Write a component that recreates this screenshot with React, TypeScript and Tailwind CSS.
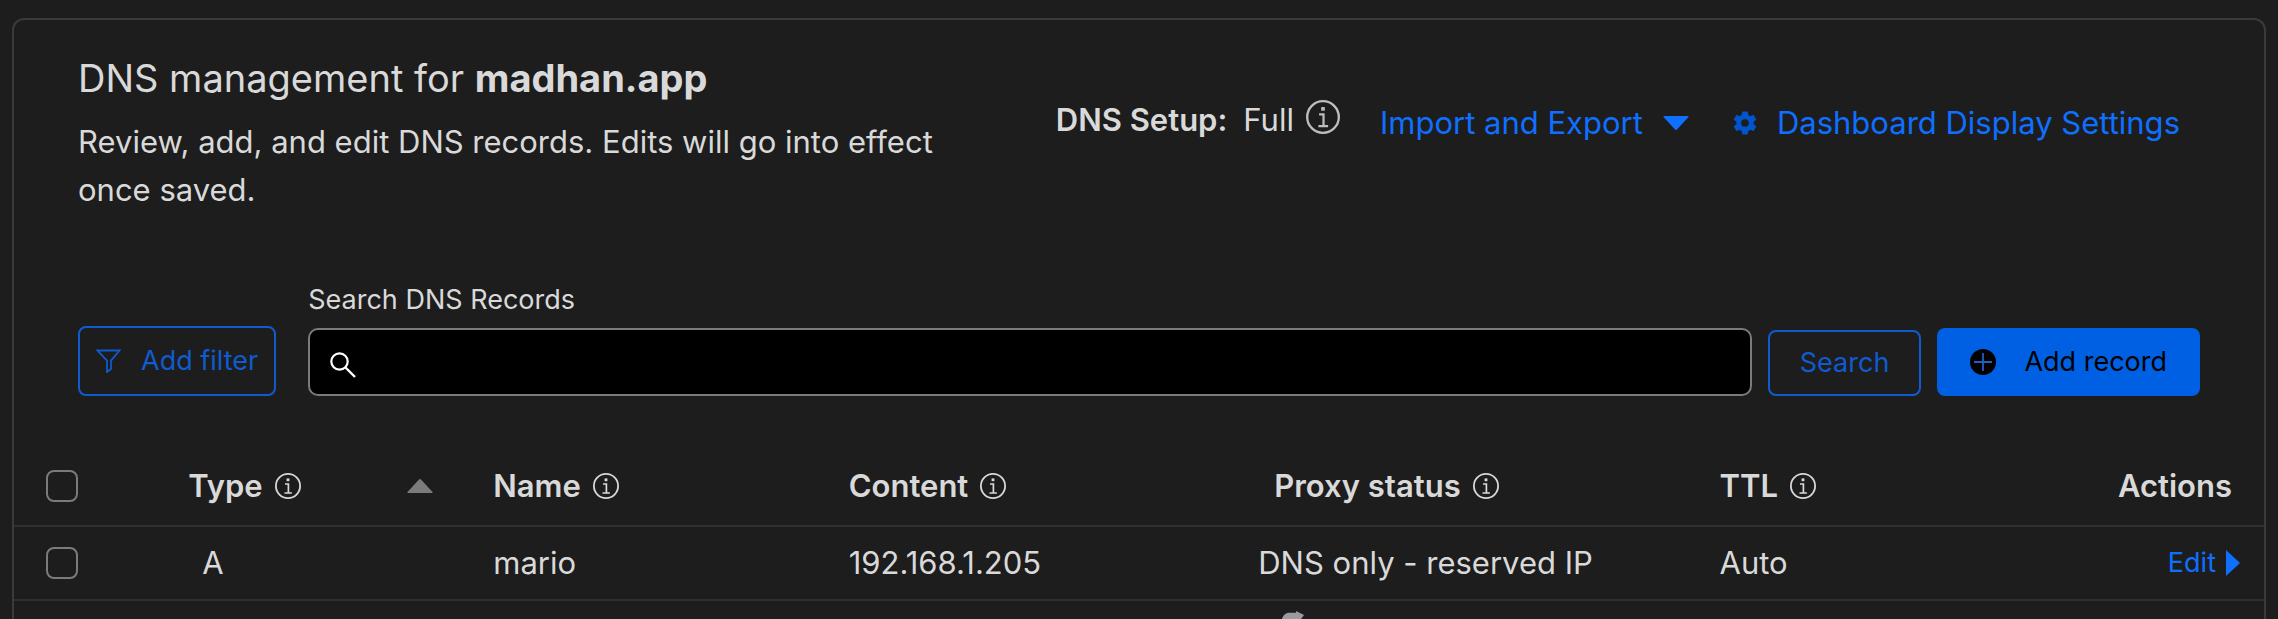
import React, { useState } from "react";

interface DnsRecord {
  id: number;
  type: string;
  name: string;
  content: string;
  proxyStatus: string;
  ttl: string;
}

interface IconProps {
  className?: string;
}

const records: DnsRecord[] = [
  {
    id: 1,
    type: "A",
    name: "mario",
    content: "192.168.1.205",
    proxyStatus: "DNS only - reserved IP",
    ttl: "Auto",
  },
];

function InfoIcon({ className }: IconProps) {
  return (
    <svg viewBox="0 0 26 26" fill="none" className={className} aria-hidden="true">
      <circle cx="13" cy="13" r="12.1" stroke="currentColor" strokeWidth="1.8" />
      <rect x="11.6" y="5.4" width="2.8" height="2.8" fill="currentColor" />
      <path d="M10 11h3.4v8.6M9.5 20h7.4" stroke="currentColor" strokeWidth="1.7" />
    </svg>
  );
}

function GearIcon({ className }: IconProps) {
  return (
    <svg viewBox="2 2 20 20" fill="currentColor" className={className} aria-hidden="true">
      <path d="M19.14 12.94c.04-.3.06-.61.06-.94s-.02-.64-.07-.94l2.03-1.58a.49.49 0 0 0 .12-.61l-1.92-3.32a.49.49 0 0 0-.59-.22l-2.39.96a7 7 0 0 0-1.62-.94l-.36-2.54a.48.48 0 0 0-.48-.41h-3.84a.48.48 0 0 0-.47.41l-.36 2.54a7 7 0 0 0-1.62.94l-2.39-.96a.48.48 0 0 0-.59.22L2.74 8.87a.48.48 0 0 0 .12.61l2.03 1.58a6 6 0 0 0 0 1.88l-2.03 1.58a.49.49 0 0 0-.12.61l1.92 3.32c.12.22.37.29.59.22l2.39-.96c.5.38 1.03.7 1.62.94l.36 2.54c.05.24.24.41.48.41h3.84c.24 0 .44-.17.47-.41l.36-2.54a7 7 0 0 0 1.62-.94l2.39.96c.22.08.47 0 .59-.22l1.92-3.32a.48.48 0 0 0-.12-.61zM12 15.2a3.2 3.2 0 1 1 0-6.4 3.2 3.2 0 0 1 0 6.4z" />
    </svg>
  );
}

function FilterIcon({ className }: IconProps) {
  return (
    <svg viewBox="0 0 25 24" fill="none" className={className} aria-hidden="true">
      <path d="M1.5 1.5h22l-8.5 10.2v8.3l-4 3v-11.3z" stroke="currentColor" strokeWidth="1.8" />
    </svg>
  );
}

function SearchIcon({ className }: IconProps) {
  return (
    <svg viewBox="0 0 26 26" fill="none" className={className} aria-hidden="true">
      <circle cx="9.5" cy="9.5" r="8.2" stroke="currentColor" strokeWidth="2.2" />
      <path d="M15.5 15.5l9.5 9.5" stroke="currentColor" strokeWidth="2.4" />
    </svg>
  );
}

function PlusIcon({ className }: IconProps) {
  return (
    <svg viewBox="0 0 26 26" fill="none" className={className} aria-hidden="true">
      <circle cx="13" cy="13" r="13" fill="currentColor" />
      <path d="M13 4v18M4 13h18" stroke="#1f5fc8" strokeWidth="1.8" />
    </svg>
  );
}

function HeaderLabel({ children }: { children: React.ReactNode }) {
  return (
    <span className="inline-flex items-center gap-3">
      {children}
      <InfoIcon className="size-[26px] shrink-0" />
    </span>
  );
}

function RowCheckbox({ label }: { label: string }) {
  return (
    <input
      type="checkbox"
      aria-label={label}
      className="block size-8 appearance-none rounded-lg border-2 border-[#7b7b7b] checked:bg-[#0060e3]"
    />
  );
}

export default function App() {
  const [query, setQuery] = useState("");

  return (
    <div className="h-screen overflow-hidden bg-[#1d1d1d] px-3 pt-[18px] font-['Inter','Liberation_Sans',sans-serif] text-[#d9d9d9]">
      <main className="min-h-full rounded-xl border-2 border-[#3a3a3a]">
        <header className="flex items-start justify-between pt-8 pr-[84px] pl-16">
          <div className="w-[880px]">
            <h1 className="text-[38px] leading-[52px]">
              DNS management for <strong className="font-bold">madhan.app</strong>
            </h1>
            <p className="mt-3.5 text-[31px] leading-12">
              Review, add, and edit DNS records. Edits will go into effect once saved.
            </p>
          </div>
          <div className="flex items-start pt-12 text-[31px] leading-10">
            <div className="flex items-start">
              <span className="font-semibold">DNS Setup:</span>
              <span className="ml-4">Full</span>
              <InfoIcon className="ml-3 size-[34px] text-[#bdbdbd]" />
            </div>
            <div className="ml-10 flex gap-11 pt-[3px] text-[#0f6fff]">
              <button type="button" className="flex items-center gap-5">
                Import and Export
                <svg viewBox="0 0 26 14" fill="currentColor" className="h-3.5 w-[26px]" aria-hidden="true">
                  <path d="M1 0h24q1 0 .5 1l-11.5 12.5q-1 1-2 0L.5 1q-.5-1 .5-1z" />
                </svg>
              </button>
              <a href="#settings" className="flex items-center gap-5">
                <GearIcon className="size-6 text-[#0055cc]" />
                Dashboard Display Settings
              </a>
            </div>
          </div>
        </header>

        <form
          className="mt-[68px] flex items-end px-16 text-[27px]"
          onSubmit={(e) => e.preventDefault()}
        >
          <button
            type="button"
            className="flex h-[70px] items-center gap-5 rounded-lg border-2 border-[#0f5bcf] px-4 whitespace-nowrap text-[#0f5bcf]"
          >
            <FilterIcon className="h-6 w-[25px]" />
            Add filter
          </button>
          <div className="ml-8 grow">
            <label htmlFor="search" className="block pb-2.5 leading-9">
              Search DNS Records
            </label>
            <div className="flex h-[68px] items-center rounded-[10px] border-2 border-[#7b7b7b] bg-black pt-1.5 pl-5">
              <SearchIcon className="size-[26px] text-white" />
              <input
                id="search"
                type="text"
                value={query}
                onChange={(e) => setQuery(e.target.value)}
                className="ml-4 h-full grow bg-transparent outline-none"
              />
            </div>
          </div>
          <button
            type="submit"
            className="ml-4 h-[66px] rounded-lg border-2 border-[#0f5bcf] px-[30px] text-[#0f5bcf]"
          >
            Search
          </button>
          <button
            type="button"
            className="ml-4 flex h-[68px] items-center gap-7 rounded-lg bg-[#0060e3] px-[33px] whitespace-nowrap text-black"
          >
            <PlusIcon className="size-[26px]" />
            Add record
          </button>
        </form>

        <table className="mt-[50px] w-full table-fixed text-left text-[31px] leading-10">
          <colgroup>
            <col className="w-[7.3%]" />
            <col className="w-[14%]" />
            <col className="w-[15.8%]" />
            <col className="w-[18.2%]" />
            <col className="w-[20.5%]" />
            <col className="w-[12%]" />
            <col />
          </colgroup>
          <thead>
            <tr className="h-20 border-b-2 border-[#303030]">
              <th className="pl-8">
                <RowCheckbox label="Select all records" />
              </th>
              <th className="pl-2.5 font-semibold">
                <div className="flex items-center justify-between pr-[60px]">
                  <HeaderLabel>Type</HeaderLabel>
                  <svg viewBox="0 0 26 14" fill="#7b7b7b" className="h-3.5 w-[26px]" aria-hidden="true">
                    <path d="M1 14h24q1 0 .5-1L14 .5q-1-1-2 0L.5 13q-.5 1 .5 1z" />
                  </svg>
                </div>
              </th>
              <th className="font-semibold">
                <HeaderLabel>Name</HeaderLabel>
              </th>
              <th className="font-semibold">
                <HeaderLabel>Content</HeaderLabel>
              </th>
              <th className="pl-4 font-semibold">
                <HeaderLabel>Proxy status</HeaderLabel>
              </th>
              <th className="font-semibold">
                <HeaderLabel>TTL</HeaderLabel>
              </th>
              <th className="pr-8 text-right font-semibold">Actions</th>
            </tr>
          </thead>
          <tbody>
            {records.map((record) => (
              <tr key={record.id} className="h-[74px] border-b-2 border-[#303030]">
                <td className="pl-8">
                  <RowCheckbox label={`Select ${record.name}`} />
                </td>
                <td className="pl-6">{record.type}</td>
                <td>{record.name}</td>
                <td>{record.content}</td>
                <td>{record.proxyStatus}</td>
                <td>{record.ttl}</td>
                <td className="pr-6">
                  <button
                    type="button"
                    className="ml-auto flex items-center gap-2.5 text-[27px] text-[#0f6fff]"
                  >
                    Edit
                    <svg viewBox="0 0 14 26" fill="currentColor" className="h-[26px] w-3.5" aria-hidden="true">
                      <path d="M0 0l14 13-14 13z" />
                    </svg>
                  </button>
                </td>
              </tr>
            ))}
            <tr className="h-[74px]">
              <td colSpan={4} />
              <td className="pt-2.5 pl-6 align-top">
                <svg viewBox="0 0 22 24" fill="#999b9c" className="h-6 w-[22px]" aria-hidden="true">
                  <path d="M0 8c1-4 4-6.3 7-6.3h7V0l8 4-3 4v16H0z" />
                </svg>
              </td>
              <td colSpan={2} />
            </tr>
          </tbody>
        </table>
      </main>
    </div>
  );
}
